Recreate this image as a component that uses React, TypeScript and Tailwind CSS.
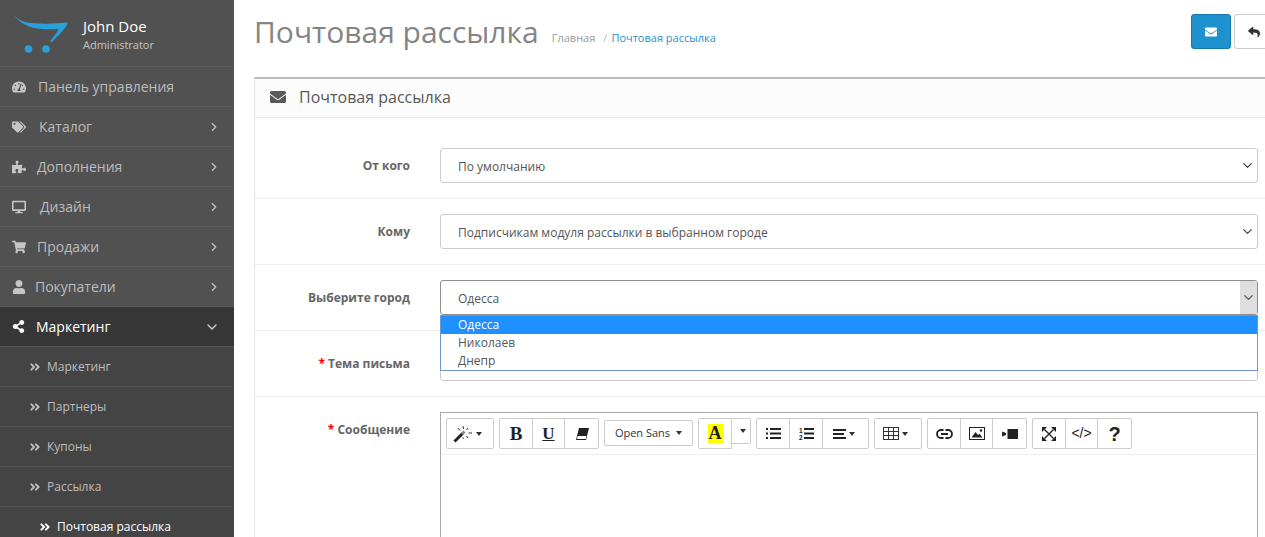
import type { ReactNode } from "react";
import { ChevronDown, ChevronRight } from "lucide-react";
import {
  FaAngleDoubleRight,
  FaDesktop,
  FaEnvelope,
  FaPuzzlePiece,
  FaReply,
  FaShareAlt,
  FaShoppingCart,
  FaTachometerAlt,
  FaTags,
  FaUser,
} from "react-icons/fa";

const navItems = [
  { label: "Панель управления", icon: <FaTachometerAlt />, gap: "ml-[12px]", arrow: false },
  { label: "Каталог", icon: <FaTags />, gap: "ml-[13px]", arrow: true },
  { label: "Дополнения", icon: <FaPuzzlePiece />, gap: "ml-[11px]", arrow: true },
  { label: "Дизайн", icon: <FaDesktop />, gap: "ml-[14px]", arrow: true },
  { label: "Продажи", icon: <FaShoppingCart />, gap: "ml-[11px]", arrow: true },
  { label: "Покупатели", icon: <FaUser />, gap: "ml-[9px]", arrow: true },
];

const subItems = ["Маркетинг", "Партнеры", "Купоны", "Рассылка"];

function Caret() {
  return <span className="ml-[3px] inline-block h-0 w-0 border-x-[3px] border-t-[4px] border-x-transparent border-t-[#333]" />;
}

// summernote toolbar icons, none of these exist in the packages
function WandIcon() {
  return (
    <svg width="20" height="18" viewBox="0 0 20 18">
      <path d="M1.500 16.500L9.500 8.500" stroke="#222" strokeWidth="3" />
      <path d="M9 9L11.500 6.500" stroke="#888" strokeWidth="3" />
      <path d="M10 1l.6 3M5 3l2 2.500M15 3l-1.500 2M15.500 8h3.500M13.500 11l1.500 2M10 12.500l.3 1.500" stroke="#333" strokeWidth="1" />
    </svg>
  );
}

function EraserIcon() {
  return (
    <svg width="14" height="12" viewBox="0 0 14 12">
      <path d="M4 0H14L11 12H1Z" fill="#222" />
      <path d="M2.700 8H11.400L10.600 11H2Z" fill="#fff" />
    </svg>
  );
}

function ListIcon() {
  return (
    <svg width="15" height="11" viewBox="0 0 15 11" fill="#222">
      <rect x="0" y="0" width="2" height="2" />
      <rect x="0" y="4.500" width="2" height="2" />
      <rect x="0" y="9" width="2" height="2" />
      <rect x="4" y="0" width="11" height="2" />
      <rect x="4" y="4.500" width="11" height="2" />
      <rect x="4" y="9" width="11" height="2" />
    </svg>
  );
}

function OrderedIcon() {
  return (
    <svg width="15" height="13" viewBox="0 0 15 13" fill="#222">
      <text x="0" y="6" fontSize="6.500" fontFamily="Liberation Sans, sans-serif" fontWeight="bold">1</text>
      <text x="0" y="13" fontSize="6.500" fontFamily="Liberation Sans, sans-serif" fontWeight="bold">2</text>
      <rect x="5" y="1" width="10" height="2" />
      <rect x="5" y="5.500" width="10" height="2" />
      <rect x="5" y="10" width="10" height="2" />
    </svg>
  );
}

function AlignIcon() {
  return (
    <svg width="13" height="10" viewBox="0 0 13 10" fill="#222">
      <rect width="13" height="2" />
      <rect y="4" width="11" height="2" />
      <rect y="8" width="13" height="2" />
    </svg>
  );
}

function TableIcon() {
  return (
    <svg width="16" height="13" viewBox="0 0 16 13" fill="none" stroke="#333" strokeWidth="1">
      <rect x="0.500" y="0.500" width="15" height="12" />
      <path d="M5.500 0V13M10.500 0V13M0 4.500H16M0 8.500H16" />
    </svg>
  );
}

function LinkIcon() {
  return (
    <svg width="17" height="10" viewBox="0 0 17 10" fill="none" stroke="#222" strokeWidth="1.800">
      <path d="M7.500 1H5a4 4 0 0 0 0 8h2.500M9.500 1H12a4 4 0 0 1 0 8H9.500M5 5h7" />
    </svg>
  );
}

function PictureIcon() {
  return (
    <svg width="16" height="13" viewBox="0 0 16 13">
      <rect x="0.500" y="0.500" width="15" height="12" fill="none" stroke="#222" strokeWidth="1" />
      <path d="M2.500 10.500L6.500 5L9 8L10.500 6.800L13.500 10.500Z" fill="#222" />
      <circle cx="12" cy="3.500" r="1.200" fill="#222" />
    </svg>
  );
}

function VideoIcon() {
  return (
    <svg width="16" height="10" viewBox="0 0 16 10" fill="#222">
      <rect x="5.500" y="0" width="10.500" height="10" />
      <path d="M0 2.500L4 4V6L0 7.500Z" />
    </svg>
  );
}

function ExpandIcon() {
  return (
    <svg width="14" height="14" viewBox="0 0 14 14" fill="#222">
      <path d="M2.500 2.500L11.500 11.500M11.500 2.500L2.500 11.500" stroke="#222" strokeWidth="1.400" />
      <path d="M0 0H5L0 5ZM14 0V5L9 0ZM0 14V9L5 14ZM14 14H9L14 9Z" />
    </svg>
  );
}

function Sidebar() {
  return (
    <aside className="w-[234px] shrink-0 bg-[#515151] text-[14px] text-[#bdbdbd]">
      <div className="flex h-[67px] items-center border-b border-[#5c5c5c] pl-[14px]">
        <svg width="54" height="40" viewBox="0 0 54 40" className="mt-[2px]">
          <path d="M0 1 C6 8 14 9 24 9.500 C36 10 46 9 54 8.500 C52 14 46 20 38 28 L36 27.500 C42 20 45 16 44 15 C30 16 10 16 0 1Z" fill="#2ba0d8" />
          <circle cx="14.500" cy="35" r="3.800" fill="#2ba0d8" />
          <circle cx="32" cy="35" r="3.800" fill="#2ba0d8" />
        </svg>
        <div className="ml-[15px] mt-[4px]">
          <div className="text-[15px] leading-[20px] text-white">John Doe</div>
          <div className="text-[11px] leading-[18px] text-[#c4c4c4]">Administrator</div>
        </div>
      </div>
      {navItems.map((item) => (
        <div key={item.label} className="flex h-[40px] items-center border-b border-[#5c5c5c] pl-[12px] pr-[13px]">
          <span className="text-[14px] text-[#c6c6c6]">{item.icon}</span>
          <span className={`${item.gap} flex-1`}>{item.label}</span>
          {item.arrow && <ChevronRight size={14} strokeWidth={2.2} />}
        </div>
      ))}
      <div className="flex h-[40px] items-center border-b border-[#555] bg-[#373737] pl-[12px] pr-[14px] text-white">
        <FaShareAlt className="text-[13px]" />
        <span className="ml-[11px] flex-1">Маркетинг</span>
        <ChevronDown size={16} strokeWidth={2} className="text-[#d0d0d0]" />
      </div>
      <div className="bg-[#444] text-[12px]">
        {subItems.map((label) => (
          <div key={label} className="flex h-[40px] items-center border-b border-[#515151] pl-[29px]">
            <FaAngleDoubleRight className="text-[12px]" />
            <span className="ml-[6px]">{label}</span>
          </div>
        ))}
        <div className="flex h-[40px] items-center pl-[39px] text-white">
          <FaAngleDoubleRight className="text-[12px]" />
          <span className="ml-[6px]">Почтовая рассылка</span>
        </div>
      </div>
    </aside>
  );
}

function FieldRow({
  label,
  required,
  height,
  pad,
  children,
}: {
  label: string;
  required?: boolean;
  height: string;
  pad: string;
  children: ReactNode;
}) {
  return (
    <div className={`flex border-b border-[#ededed] ${height} ${pad}`}>
      <label className="w-[155px] shrink-0 pt-[9px] text-right text-[12px] font-bold leading-[18px] text-[#666]">
        {required && <span className="text-[#f00]">* </span>}
        {label}
      </label>
      <div className="ml-[30px] flex-1 pr-[7px]">{children}</div>
    </div>
  );
}

function SelectBox({ value, active }: { value: string; active?: boolean }) {
  return (
    <div
      className={`flex h-[35px] items-center rounded-[3px] border pl-[17px] text-[12px] text-[#555] ${
        active ? "border-[#8f8f8f] pr-0" : "border-[#ccc] pr-[2px]"
      }`}
    >
      <span className="flex-1 pt-[2px]">{value}</span>
      {active ? (
        <span className="flex h-full w-[17px] items-center justify-center bg-[#dedede]">
          <ChevronDown size={15} strokeWidth={2} className="text-[#555]" />
        </span>
      ) : (
        <ChevronDown size={15} strokeWidth={2} className="text-[#444]" />
      )}
    </div>
  );
}

function ToolGroup({ children, className = "" }: { children: ReactNode; className?: string }) {
  return <div className={`flex h-[31px] divide-x divide-[#ccc] rounded-[2px] border border-[#ccc] ${className}`}>{children}</div>;
}

function ToolBtn({ children, width = "w-[33px]" }: { children: ReactNode; width?: string }) {
  return <div className={`flex items-center justify-center text-[#222] ${width}`}>{children}</div>;
}

function Toolbar() {
  return (
    <div className="flex h-[42px] items-start gap-[5px] border-b border-[#eee] pl-[5px] pt-[5px]">
      <ToolGroup>
        <ToolBtn width="w-[46px] pr-[6px]">
          <WandIcon />
          <Caret />
        </ToolBtn>
      </ToolGroup>
      <ToolGroup>
        <ToolBtn>
          <span className="font-['Liberation_Serif',serif] text-[19px] font-bold leading-none">B</span>
        </ToolBtn>
        <ToolBtn width="w-[32px]">
          <span className="font-['Liberation_Serif',serif] text-[17px] font-bold leading-none underline">U</span>
        </ToolBtn>
        <ToolBtn><EraserIcon /></ToolBtn>
      </ToolGroup>
      <div className="mt-[2px] flex h-[26px] w-[89px] items-center justify-center rounded-[2px] border border-[#ccc] text-[11px] text-[#333]">
        <span className="mr-[3px]">Open Sans</span>
        <Caret />
      </div>
      <div className="flex items-start">
        <ToolGroup className="rounded-r-none">
          <ToolBtn width="w-[32px]">
            <span className="bg-[#ff0] px-[1px] font-['Liberation_Serif',serif] text-[18px] font-bold leading-[19px] text-[#222]">A</span>
          </ToolBtn>
        </ToolGroup>
        <div className="flex h-[26px] w-[19px] items-center justify-center rounded-r-[2px] border border-l-0 border-[#ccc]">
          <Caret />
        </div>
      </div>
      <ToolGroup>
        <ToolBtn><ListIcon /></ToolBtn>
        <ToolBtn><OrderedIcon /></ToolBtn>
        <ToolBtn width="w-[45px] pr-[4px]">
          <AlignIcon />
          <Caret />
        </ToolBtn>
      </ToolGroup>
      <ToolGroup>
        <ToolBtn width="w-[46px] pr-[5px]">
          <TableIcon />
          <Caret />
        </ToolBtn>
      </ToolGroup>
      <ToolGroup>
        <ToolBtn><LinkIcon /></ToolBtn>
        <ToolBtn width="w-[32px]"><PictureIcon /></ToolBtn>
        <ToolBtn><VideoIcon /></ToolBtn>
      </ToolGroup>
      <ToolGroup>
        <ToolBtn><ExpandIcon /></ToolBtn>
        <ToolBtn width="w-[32px]">
          <span className="font-['Liberation_Sans',sans-serif] text-[14px]">&lt;/&gt;</span>
        </ToolBtn>
        <ToolBtn>
          <span className="font-['Liberation_Sans',sans-serif] text-[20px] font-bold leading-none">?</span>
        </ToolBtn>
      </ToolGroup>
    </div>
  );
}

function Main() {
  return (
    <main className="min-w-0 flex-1 bg-white pl-[20px]">
      <div className="flex h-[77px] items-start">
        <h1 className="mt-[11px] text-[30px] font-normal leading-[41px] text-[#848484]">Почтовая рассылка</h1>
        <div className="ml-[13px] mt-[30px] text-[11px] leading-[16px] text-[#999]">
          Главная
          <span className="ml-[8px] mr-[4px] text-[#bbb]">/</span>
          <span className="text-[#1e91cf]">Почтовая рассылка</span>
        </div>
        <div className="ml-auto mt-[14px] flex gap-[3px]">
          <div className="flex h-[35px] w-[40px] items-center justify-center rounded-[3px] border border-[#1978ab] bg-[#1e91cf] text-[12px] text-white">
            <FaEnvelope />
          </div>
          <div className="flex h-[35px] w-[31px] items-center rounded-l-[3px] border border-r-0 border-[#ccc] bg-white pl-[13px] text-[12px] text-[#333]">
            <FaReply />
          </div>
        </div>
      </div>
      <section className="border-l border-t-2 border-l-[#e4e4e4] border-t-[#bbb]">
        <div className="flex h-[39px] items-center border-b border-[#e8e8e8] bg-[#fcfcfc] pb-[2px] pl-[15px] text-[16px] text-[#595959]">
          <FaEnvelope className="text-[16px]" />
          <span className="ml-[13px]">Почтовая рассылка</span>
        </div>
        <FieldRow label="От кого" height="h-[81px]" pad="pt-[30px]">
          <SelectBox value="По умолчанию" />
        </FieldRow>
        <FieldRow label="Кому" height="h-[66px]" pad="pt-[15px]">
          <SelectBox value="Подписчикам модуля рассылки в выбранном городе" />
        </FieldRow>
        <FieldRow label="Выберите город" height="h-[66px]" pad="pt-[15px]">
          <div className="relative">
            <SelectBox value="Одесса" active />
            <ul className="absolute inset-x-0 top-[35px] z-10 h-[56px] border border-[#6f94d8] bg-white text-[12px] leading-[18px] text-[#555]">
              <li className="bg-[#1e90ff] pl-[17px] text-white">Одесса</li>
              <li className="pl-[17px]">Николаев</li>
              <li className="pl-[17px]">Днепр</li>
            </ul>
          </div>
        </FieldRow>
        <FieldRow label="Тема письма" required height="h-[66px]" pad="pt-[15px]">
          <div className="h-[35px] rounded-[3px] border border-[#ccc]" />
        </FieldRow>
        <FieldRow label="Сообщение" required height="h-[200px]" pad="pt-[15px]">
          <div className="h-[185px] border border-[#a9a9a9]">
            <Toolbar />
          </div>
        </FieldRow>
      </section>
    </main>
  );
}

export default function App() {
  return (
    <div className="flex h-[537px] w-full overflow-hidden font-['Open_Sans',sans-serif]">
      <Sidebar />
      <Main />
    </div>
  );
}
